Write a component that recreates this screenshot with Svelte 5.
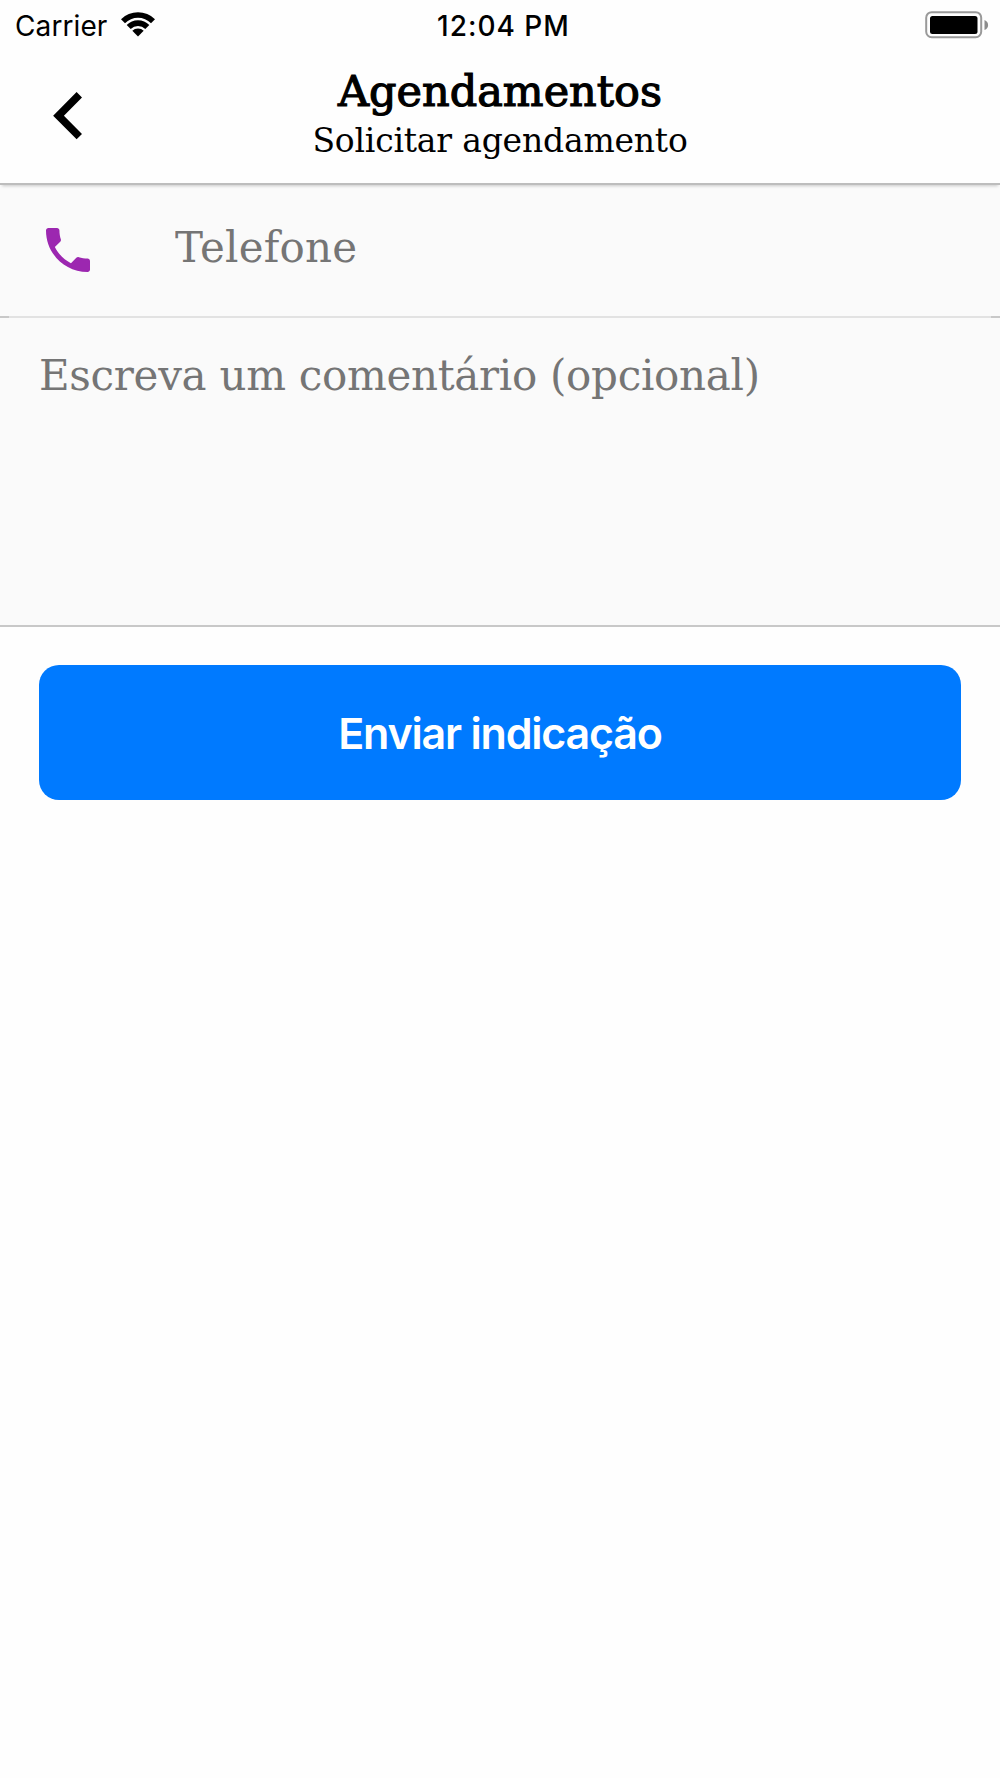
<script lang="ts">
  let phone = $state('');
  let comment = $state('');

  const carrier = 'Carrier';
  const time = '12:04 PM';
</script>

<div class="screen">
  <div class="status">
    <div class="network">
      <span class="carrier">{carrier}</span>
      <svg class="wifi" viewBox="0 0 34 25" aria-hidden="true">
        <path d="M0 7.2a24.2 24.2 0 0 1 34 0l-4 4a18.4 18.4 0 0 0-26 0z" />
        <path d="M5.7 13a16 16 0 0 1 22.6 0l-4 4a10.4 10.4 0 0 0-14.6 0z" />
        <path d="M11.300 18.800a8 8 0 0 1 11.400 0L17 24.600z" />
      </svg>
    </div>
    <span class="time">{time}</span>
    <svg class="battery" viewBox="0 0 64 28" aria-hidden="true">
      <rect x="1.2" y="1.2" width="55" height="25" rx="5.5" fill="none" stroke="#999" stroke-width="2" />
      <rect x="5" y="5" width="47.5" height="18" rx="2.5" />
      <path d="M59.5 9q3.6 1.5 3.6 5t-3.6 5z" fill="#8c8c8c" />
    </svg>
  </div>

  <header>
    <button class="back" aria-label="Voltar">
      <svg viewBox="0 0 30 48" aria-hidden="true">
        <path d="M26.3 2.8 5.5 23.7l20.8 20.9" fill="none" stroke="#000" stroke-width="7.6" />
      </svg>
    </button>
    <div class="titles">
      <h1>Agendamentos</h1>
      <h2>Solicitar agendamento</h2>
    </div>
  </header>

  <label class="phone">
    <svg viewBox="3 3 18 18" aria-hidden="true">
      <path
        d="M6.62 10.79c1.44 2.83 3.76 5.14 6.59 6.59l2.2-2.2c.27-.27.67-.36 1.02-.24 1.12.37 2.33.57 3.57.57.55 0 1 .45 1 1V20c0 .55-.45 1-1 1-9.39 0-17-7.61-17-17 0-.55.45-1 1-1h3.5c.55 0 1 .45 1 1 0 1.25.2 2.45.57 3.57.11.35.03.74-.25 1.02l-2.2 2.2z"
      />
    </svg>
    <input type="tel" placeholder="Telefone" bind:value={phone} />
  </label>
  <textarea placeholder="Escreva um comentário (opcional)" bind:value={comment}></textarea>

  <button class="send">Enviar indicação</button>
</div>

<style>
  :global(body) {
    margin: 0;
    background: #fff;
  }
  .screen {
    display: flex;
    flex-direction: column;
    min-height: 1778px;
    background: #fefefe;
    color: #000;
  }
  .status {
    display: grid;
    grid-template-columns: 1fr auto 1fr;
    align-items: center;
    box-sizing: border-box;
    height: 50px;
    padding: 2px 11px 0 15px;
    font: 28px/48px Inter, sans-serif;
  }
  .network {
    display: flex;
    align-items: center;
    gap: 14px;
  }
  .carrier {
    letter-spacing: 0.1px;
  }
  .wifi {
    width: 34px;
    height: 25px;
    margin-top: -3px;
  }
  .time {
    padding-left: 3px;
    font-weight: 500;
    letter-spacing: 1px;
  }
  .battery {
    justify-self: end;
    width: 64px;
    height: 28px;
    margin-top: -3px;
  }
  header {
    display: grid;
    grid-template-columns: 140px 1fr 140px;
    box-sizing: border-box;
    height: 135px;
    border-bottom: 2px solid #bdbdbd;
    box-shadow: 0 3px 3px -2px rgba(0, 0, 0, 0.2);
    z-index: 1;
  }
  button {
    border: 0;
    cursor: pointer;
  }
  .back {
    display: flex;
    align-items: flex-start;
    padding: 42px 0 0 53px;
    background: none;
  }
  .back svg {
    width: 30px;
    height: 48px;
  }
  .titles {
    text-align: center;
    white-space: nowrap;
  }
  h1,
  h2 {
    margin: 0;
    font-family: 'DejaVu Serif', serif;
    font-weight: 400;
  }
  h1 {
    margin-top: 16px;
    font-size: 43px;
    line-height: 50px;
    -webkit-text-stroke: 1.2px #000;
  }
  h2 {
    margin-top: 2px;
    font-size: 33px;
    line-height: 46px;
    letter-spacing: -0.2px;
  }
  .phone {
    display: flex;
    align-items: center;
    box-sizing: border-box;
    height: 133px;
    padding: 0 0 2px 46px;
    background: #fafafa;
    border-style: solid;
    border-width: 0 0 2px;
    border-image: linear-gradient(90deg, #c8c8c8 10px, #e2e2e2 10px calc(100% - 10px), #c8c8c8 0) 1;
  }
  .phone svg {
    width: 44px;
    height: 44px;
    fill: #9c27b0;
  }
  input,
  textarea {
    border: 0;
    padding: 0;
    outline: 0;
    background: none;
    font: 42px/56px 'DejaVu Serif', serif;
    color: #000;
  }
  input {
    flex: 1;
    margin: -4px 0 0 85px;
    letter-spacing: 0.2px;
  }
  textarea {
    box-sizing: border-box;
    height: 309px;
    padding: 30px 39px;
    resize: none;
    background: #fafafa;
    border-bottom: 2px solid #c8c8c8;
    letter-spacing: -0.3px;
  }
  input::placeholder,
  textarea::placeholder {
    color: #757575;
  }
  .send {
    height: 135px;
    margin: 38px 39px 0;
    padding-top: 3px;
    border-radius: 20px;
    background: #007aff;
    color: #fff;
    font: 600 43px/1 Inter, sans-serif;
    letter-spacing: -1.2px;
  }
</style>
